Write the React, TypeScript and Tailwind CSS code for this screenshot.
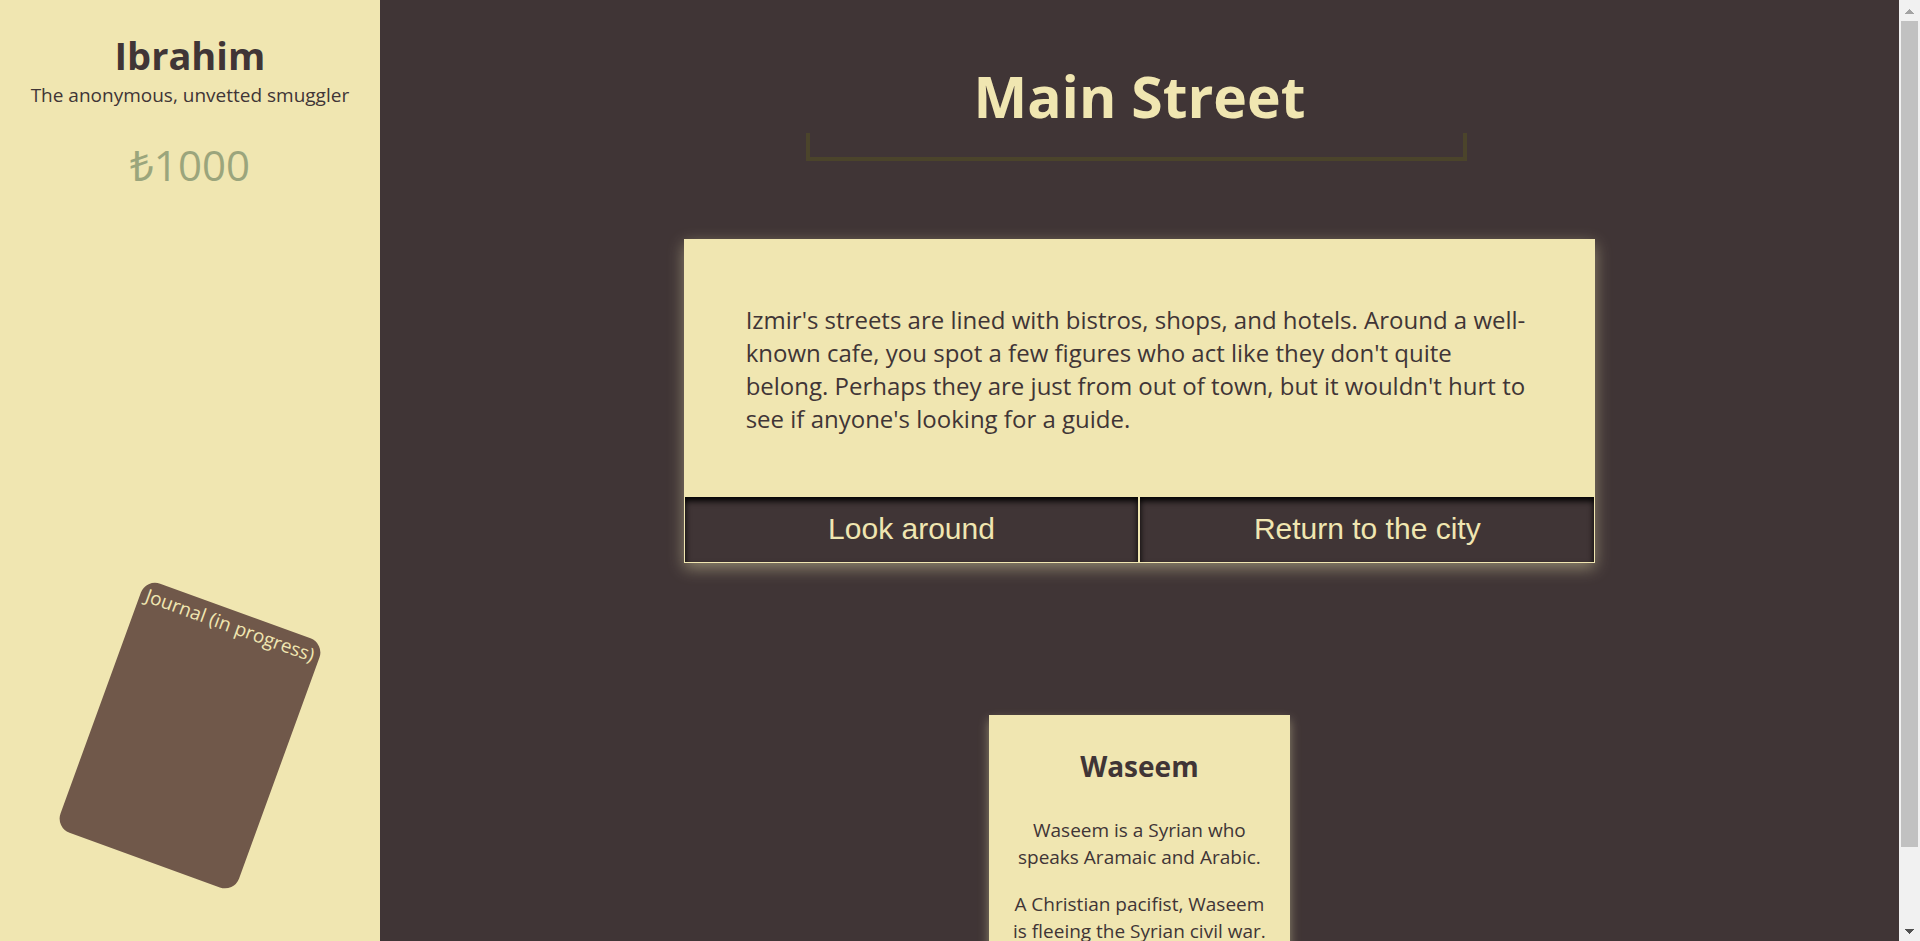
const actions = ["Look around", "Return to the city"];

function Sidebar() {
  return (
    <aside className="flex w-1/5 shrink-0 flex-col items-center bg-[#f0e6b1] pt-[31px] pb-[73px] text-center">
      <h2 className="text-[38px] leading-[48px] font-bold">Ibrahim</h2>
      <p className="text-[19px] leading-8 whitespace-nowrap">The anonymous, unvetted smuggler</p>
      <p className="mt-6 text-[42px] leading-[60px] text-[#9ba57c]">₺1000</p>
      <button
        type="button"
        className="mt-auto flex h-[265px] w-1/2 rotate-[20deg] justify-center rounded-[15px] bg-[#70584a] pt-0.5 text-[19px] leading-[27px] whitespace-nowrap text-[#f0e6b1]"
      >
        Journal (in progress)
      </button>
    </aside>
  );
}

function Scene() {
  return (
    <section className="mt-[78px] w-3/5 bg-[#f0e6b1] shadow-[0_5px_15px_#f0e6b173]">
      <p className="px-[62px] pt-16 pb-[61px] text-[24px] leading-[33px]">
        Izmir's streets are lined with bistros, shops, and hotels. Around a well-known cafe, you spot a few figures who
        act like they don't quite belong. Perhaps they are just from out of town, but it wouldn't hurt to see if
        anyone's looking for a guide.
      </p>
      <div className="grid grid-cols-2">
        {actions.map((label) => (
          <button
            key={label}
            type="button"
            className="h-[67px] border border-[#f0e6b1] bg-[#403536] pb-0.5 font-['Liberation_Sans',Arial,sans-serif] text-[30px] leading-[34px] shadow-[inset_0_4px_6px_#000] text-[#f0e6b1]"
          >
            {label}
          </button>
        ))}
      </div>
    </section>
  );
}

function Character() {
  return (
    <section className="mt-[152px] w-[301px] bg-[#f0e6b1] px-5 pt-[31px] pb-10 text-center shadow-[0_5px_10px_#f0e6b173]">
      <h3 className="text-[28px] leading-10 font-bold">Waseem</h3>
      <p className="mt-[31px] text-[19px] leading-[27px]">Waseem is a Syrian who speaks Aramaic and Arabic.</p>
      <p className="mt-5 text-[19px] leading-[27px]">A Christian pacifist, Waseem is fleeing the Syrian civil war.</p>
    </section>
  );
}

function Scrollbar() {
  return (
    <div aria-hidden="true" className="flex w-[21px] shrink-0 flex-col items-center bg-[#f1f1f1]">
      <svg className="h-[21px] w-[21px] shrink-0" viewBox="0 0 21 21" fill="#a3a3a3" shapeRendering="crispEdges">
        <path d="M10 9h1v1h1v1h1v1h1v1h1v1H6v-1h1v-1h1v-1h1v-1h1z" />
      </svg>
      <div className="w-[17px] flex-[826] bg-[#c1c1c1]" />
      <div className="flex-[73]" />
      <svg className="h-[21px] w-[21px] shrink-0" viewBox="0 0 21 21" fill="#505050" shapeRendering="crispEdges">
        <path d="M6 9h9v1h-1v1h-1v1h-1v1h-1v1h-1v-1H9v-1H8v-1H7v-1H6z" />
      </svg>
    </div>
  );
}

export default function App() {
  return (
    <div className="flex h-screen overflow-hidden bg-[#403536] font-['Open_Sans','Noto_Sans',sans-serif] text-[#403536]">
      <div className="flex min-w-0 flex-1">
        <Sidebar />
        <main className="flex min-w-0 flex-1 flex-col items-center overflow-hidden">
          <h1 className="mt-[59px] text-[57px] leading-[74px] font-bold text-[#f0e6b1]">Main Street</h1>
          <div className="mr-1.5 h-7 w-[661px] shrink-0 border-4 border-t-0 border-[#4b442b]" />
          <Scene />
          <Character />
        </main>
      </div>
      <Scrollbar />
    </div>
  );
}
